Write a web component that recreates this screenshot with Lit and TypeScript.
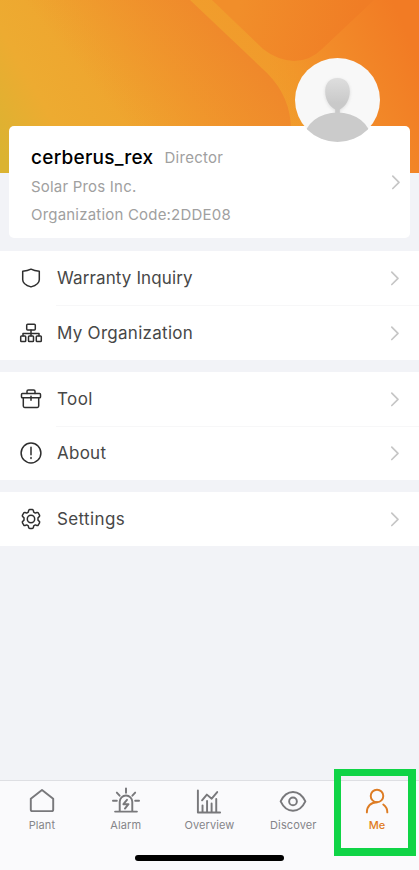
import { LitElement, html, css, svg } from "lit";
import { customElement, property } from "lit/decorators.js";

const menuIcons: Record<string, unknown> = {
  shield: svg`<path d="M12 3.200c2.400 1.300 5.200 1.900 8.300 2v8.500c0 3.400-3.500 5.700-8.300 7.200c-4.800-1.500-8.300-3.800-8.300-7.200V5.200C6.800 5.100 9.600 4.500 12 3.200z"/>`,
  org: svg`<rect x="7.700" y="3.200" width="8.600" height="5.700" rx="1"/><path d="M12 8.900v5.800M4 14.700v-2.300h16v2.300"/><rect x="1.700" y="14.900" width="5" height="5.600" rx=".8"/><rect x="9.500" y="14.900" width="5" height="5.600" rx=".8"/><rect x="17.300" y="14.900" width="5" height="5.600" rx=".8"/>`,
  tool: svg`<path d="M8 6.600V4.300q0-1.400 1.400-1.400h5.200q1.400 0 1.400 1.400V6.600"/><rect x="2.500" y="6.600" width="19" height="4.200" rx=".9"/><path d="M4.300 10.800v8.300q0 1.300 1.300 1.300h12.800q1.300 0 1.300-1.300v-8.300M12 9.200v4"/>`,
  about: svg`<circle cx="12" cy="12" r="9.900"/><path d="M12 6.200v7.600M12 16.600v1"/>`,
  gear: svg`<path d="M9.600 3.600Q9.800 2.600 10.800 2.600H13.200Q14.200 2.600 14.400 3.600L14.700 5.200L16.300 6.100L17.900 5.500Q18.800 5.200 19.300 6L20.500 8.100Q21 9 20.300 9.600L19 10.700V13.300L20.300 14.400Q21 15 20.500 15.900L19.300 18Q18.800 18.800 17.900 18.500L16.300 17.900L14.700 18.800L14.400 20.400Q14.200 21.400 13.200 21.400H10.800Q9.800 21.400 9.600 20.400L9.300 18.800L7.700 17.900L6.100 18.500Q5.200 18.800 4.700 18L3.500 15.900Q3 15 3.700 14.400L5 13.300V10.700L3.700 9.600Q3 9 3.500 8.100L4.700 6Q5.200 5.200 6.100 5.500L7.700 6.100L9.300 5.200z"/><circle cx="12" cy="12" r="3.700"/>`,
};

const tabIcons: Record<string, unknown> = {
  plant: svg`<path d="M2.900 12.100 14.500 3 26.100 12.100V23.300q0 1.700-1.700 1.700H4.600q-1.700 0-1.700-1.700z"/>`,
  alarm: svg`<path d="M3.200 25.500h22.600M8 25V15.300a6.500 6.500 0 0 1 13 0V25M14.500 1.400v4.500M5 5.800l2.900 3.200M24 5.800l-2.900 3.200M1 14.200h4M24 14.200h4"/><path d="M15.500 13.300 11.800 17.800h5.300l-3.700 4.500"/>`,
  overview: svg`<path d="M3 3.500V26.500H26M7.800 25.500V19M12.500 25.500V14.500M17.200 25.500V17M22 25.500V12.500M7.300 13.800 12.300 7.900l5 4.200 5.700-6.900"/>`,
  discover: svg`<path d="M1.700 14.900C4.800 8.300 9.200 5.100 14.500 5.100s9.700 3.200 12.800 9.800C24.200 21.500 19.800 24.600 14.500 24.600S4.800 21.500 1.700 14.900z"/><circle cx="14.500" cy="14.900" r="4"/>`,
  me: svg`<circle cx="14.500" cy="9.300" r="6.500"/><path d="M4 26.300c0-6.300 4.100-10.500 10.500-10.500M21 18.200c2.900 2.100 4.200 4.700 4.200 8.100"/>`,
};

@customElement("chevron-icon")
class ChevronIcon extends LitElement {
  static styles = css`
    :host { display: block; width: 10px; height: 16px; }
    svg { display: block; fill: none; stroke: #c6c6c6; stroke-width: 1.700; stroke-linecap: round; stroke-linejoin: round; }
  `;
  render() {
    return html`<svg width="10" height="16" viewBox="0 0 10 16"><path d="M1.800 2.100 8 8.300 1.800 14.500"/></svg>`;
  }
}

@customElement("menu-row")
class MenuRow extends LitElement {
  @property() icon = "";
  @property() label = "";
  @property({ type: Number }) spacing = 0;
  static styles = css`
    :host { display: flex; align-items: center; height: 54px; padding: 0 19px; box-sizing: border-box; }
    .icon { width: 24px; height: 24px; margin-right: 14px; fill: none; stroke: #2e2e2e; stroke-width: 1.500; stroke-linecap: round; stroke-linejoin: round; }
    .label { flex: 1; font-size: 17px; line-height: 24px; color: #474747; }
  `;
  render() {
    return html`<svg class="icon" viewBox="0 0 24 24">${menuIcons[this.icon]}</svg>
      <span class="label" style="letter-spacing:${this.spacing}px">${this.label}</span><chevron-icon></chevron-icon>`;
  }
}

@customElement("app-root")
class AppRoot extends LitElement {
  static styles = css`
    :host { display: flex; flex-direction: column; position: relative; width: 419px; height: 870px; overflow: hidden; background: #f2f3f7; font-family: Inter, "Liberation Sans", sans-serif; }
    .top { display: grid; height: 251px; flex: none; grid-template-rows: 126px 112px 13px; }
    .art { grid-area: 1 / 1 / 4 / 2; width: 419px; height: 173px; display: block; }
    .card { grid-area: 2 / 1; position: relative; margin: 0 9px; background: #fff; border-radius: 5px; display: flex; align-items: center; padding: 0 9px 0 22px; }
    .who { flex: 1; display: flex; flex-direction: column; }
    .name { display: flex; align-items: center; gap: 11px; height: 31px; margin-top: 7px; }
    .user { font-size: 19px; font-weight: 500; color: #000; letter-spacing: .25px; }
    .role { font-size: 15px; color: #a0a0a0; letter-spacing: .28px; }
    .line { font-size: 15px; line-height: 28px; height: 28px; color: #a0a0a0; letter-spacing: .2px; }
    .avatar { position: absolute; left: 286px; top: -68px; width: 85px; height: 84px; }
    .group { background: #fff; margin-bottom: 12px; flex: none; }
    .group.pair { height: 108.500px; }
    .sep { height: 1px; margin: 0 0 -.500px 56px; background: #f7f7f8; }
    .tabs { margin-top: auto; height: 90px; flex: none; box-sizing: border-box; border-top: 1px solid #dedfe3; background: #fafafc; display: grid; grid-template-columns: repeat(5, 1fr); padding-top: 6px; }
    .tab { display: flex; flex-direction: column; align-items: center; color: #858589; font-size: 11px; line-height: 14px; letter-spacing: .1px; }
    .tab svg { width: 28px; height: 28px; margin-bottom: 3px; fill: none; stroke: #78787b; stroke-width: 2; stroke-linecap: round; stroke-linejoin: round; }
    .active { color: #e07c22; font-weight: 500; }
    .active svg { stroke: #dd7c24; }
    .home { position: absolute; left: 135px; top: 855px; width: 149px; height: 6px; border-radius: 3px; background: #000; }
    .highlight { position: absolute; left: 334px; top: 769px; width: 82px; height: 87px; box-sizing: border-box; border: solid #10d446; border-width: 7px 8px 8px 7px; }
  `;
  render() {
    const tabs = [["plant", "Plant"], ["alarm", "Alarm"], ["overview", "Overview"], ["discover", "Discover"], ["me", "Me"]];
    return html`
      <div class="top">
        <svg class="art" viewBox="0 0 419 173">
          <defs>
            <linearGradient id="base" gradientUnits="userSpaceOnUse" x1="0" y1="150" x2="330" y2="-40">
              <stop offset="0" stop-color="#dbb331"/><stop offset=".16" stop-color="#edab31"/><stop offset=".5" stop-color="#f0a02d"/><stop offset=".78" stop-color="#f19a2b"/><stop offset="1" stop-color="#f38627"/>
            </linearGradient>
            <linearGradient id="panel" gradientUnits="userSpaceOnUse" x1="130" y1="130" x2="240" y2="40">
              <stop offset="0" stop-color="#f08c2b" stop-opacity="0"/><stop offset="1" stop-color="#ef882b"/>
            </linearGradient>
            <linearGradient id="notch" gradientUnits="userSpaceOnUse" x1="240" y1="0" x2="360" y2="20">
              <stop offset="0" stop-color="#f18e2a"/><stop offset="1" stop-color="#f07d25"/>
            </linearGradient>
            <linearGradient id="right" gradientUnits="userSpaceOnUse" x1="270" y1="100" x2="410" y2="40">
              <stop offset="0" stop-color="#f19829" stop-opacity="0"/><stop offset=".5" stop-color="#f28b29"/><stop offset="1" stop-color="#f27b24"/>
            </linearGradient>
          </defs>
          <rect width="419" height="173" fill="url(#base)"/>
          <path d="M0 0H190L267 73Q291 97 291 130V173H0z" fill="url(#panel)"/>
          <path d="M360 0H419V173H291V130Q291 97 270 76V50z" fill="url(#right)"/>
          <path d="M212 0H374L322 49Q310 61 294 61Q277 60 263 49z" fill="url(#notch)"/>
        </svg>
        <div class="card">
          <div class="who">
            <div class="name"><span class="user">cerberus_rex</span><span class="role">Director</span></div>
            <div class="line">Solar Pros Inc.</div>
            <div class="line">Organization Code:2DDE08</div>
          </div>
          <chevron-icon></chevron-icon>
          <svg class="avatar" viewBox="0 0 85 84">
            <defs>
              <clipPath id="round"><ellipse cx="42.500" cy="42" rx="42.500" ry="42"/></clipPath>
              <linearGradient id="face" x1="0" y1="0" x2="0" y2="1"><stop offset="0" stop-color="#dedede"/><stop offset=".7" stop-color="#c9c9c9"/></linearGradient>
              <filter id="soft" x="-30%" y="-30%" width="160%" height="160%"><feGaussianBlur stdDeviation="1.500"/></filter>
            </defs>
            <g clip-path="url(#round)">
              <rect width="85" height="84" fill="#f8f8f8"/>
              <path d="M42.500 21C50 21 55 26 55 34.500C55 43 50 50 45 52.500V57H40V52.500C35 50 30 43 30 34.500C30 26 35 21 42.500 21z" fill="#c6c6c6" opacity=".55" filter="url(#soft)"/>
              <path d="M42.500 20C50 20 54.800 25 54.800 33.500C54.800 42 50 49 44.800 51.500V56H40.200V51.500C35 49 30.200 42 30.200 33.500C30.200 25 35 20 42.500 20z" fill="url(#face)"/>
              <ellipse cx="42.500" cy="80" rx="33" ry="25.500" fill="#cbcbcb"/>
            </g>
          </svg>
        </div>
      </div>
      <div class="group pair"><menu-row icon="shield" label="Warranty Inquiry" spacing=".12"></menu-row><div class="sep"></div><menu-row icon="org" label="My Organization" spacing=".28"></menu-row></div>
      <div class="group pair"><menu-row icon="tool" label="Tool" spacing=".4"></menu-row><div class="sep"></div><menu-row icon="about" label="About" spacing=".25"></menu-row></div>
      <div class="group"><menu-row icon="gear" label="Settings" spacing=".38"></menu-row></div>
      <div class="tabs">
        ${tabs.map(([id, label]) => html`<div class="tab ${id === "me" ? "active" : ""}"><svg viewBox="0 0 29 29">${tabIcons[id]}</svg><span>${label}</span></div>`)}
      </div>
      <div class="highlight"></div>
      <div class="home"></div>
    `;
  }
}
